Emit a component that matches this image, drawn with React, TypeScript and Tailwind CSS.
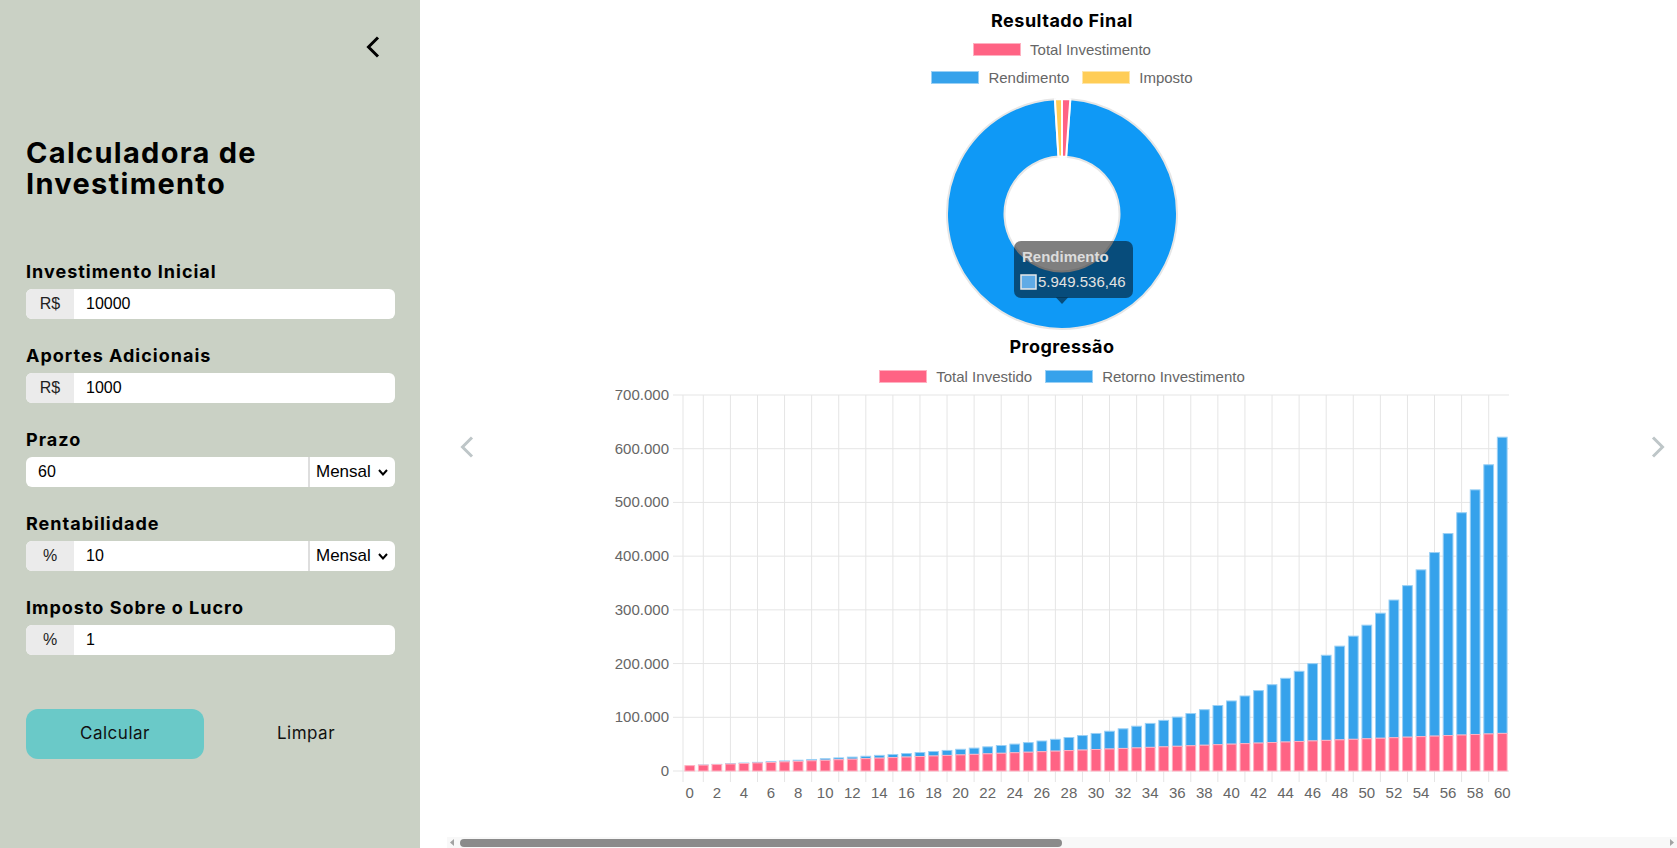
import React from 'react';

const sans = { fontFamily: 'Inter, "Noto Sans", sans-serif' };

// doughnut data
const totalInvestido = 70000;
const rendimento = 5949536.46;
const imposto = 59495.36;
const soma = totalInvestido + rendimento + imposto;

function arcPath(a0: number, a1: number, R: number, r: number, cx = 120, cy = 120) {
  const rad = (a: number) => (a * Math.PI) / 180;
  const pt = (a: number, rr: number) => [cx + rr * Math.sin(rad(a)), cy - rr * Math.cos(rad(a))];
  const large = a1 - a0 > 180 ? 1 : 0;
  const [x0, y0] = pt(a0, R);
  const [x1, y1] = pt(a1, R);
  const [x2, y2] = pt(a1, r);
  const [x3, y3] = pt(a0, r);
  return `M${x0} ${y0} A${R} ${R} 0 ${large} 1 ${x1} ${y1} L${x2} ${y2} A${r} ${r} 0 ${large} 0 ${x3} ${y3} Z`;
}

function Donut() {
  const aPink = (totalInvestido / soma) * 360;
  const aBlue = aPink + (rendimento / soma) * 360;
  return (
    <svg width="240" height="240" viewBox="0 0 240 240" className="overflow-visible">
      <path d={arcPath(aPink, aBlue, 115, 57.5)} fill="#0f99f6" stroke="#e6e6e6" strokeWidth="2" />
      <path d={arcPath(0, aPink, 115, 57.5)} fill="#ff6384" stroke="#fff" strokeWidth="2" />
      <path d={arcPath(aBlue, 360, 115, 57.5)} fill="#ffcd56" stroke="#fff" strokeWidth="2" />
      {/* tooltip */}
      <rect x="72" y="147" width="119" height="57" rx="7" fill="rgba(0,0,0,0.5)" />
      <polygon points="114,203.5 126,203.5 120,210" fill="rgba(0,0,0,0.5)" />
      <text x="80" y="168" fontSize="15" fontWeight="700" fill="#dcdcdc" fontFamily="'Liberation Sans', Arial, sans-serif">
        Rendimento
      </text>
      <rect x="79" y="181" width="15" height="14" fill="#5fabe6" stroke="#e8e8e8" strokeWidth="1.5" />
      <text x="96" y="193" fontSize="15" fill="#e2e2e2" fontFamily="'Liberation Sans', Arial, sans-serif">
        5.949.536,46
      </text>
    </svg>
  );
}

const fmt = (n: number) => n.toLocaleString('de-DE');

function BarChart() {
  const L = 81;
  const R = 907;
  const T = 10;
  const B = 386;
  const cw = (R - L) / 61;
  const bw = cw * 0.72;
  const y = (v: number) => B - (v / 700000) * (B - T);
  const months = Array.from({ length: 61 }, (_, i) => i);
  const font = "'Liberation Sans', Arial, sans-serif";

  return (
    <svg width="920" height="420" viewBox="0 0 920 420">
      {Array.from({ length: 8 }, (_, k) => (
        <g key={k}>
          <line x1={L - 10} x2={R} y1={y(k * 100000)} y2={y(k * 100000)} stroke="#e5e5e5" strokeWidth="1" />
          <text x={L - 14} y={y(k * 100000) + 5} textAnchor="end" fontSize="15" fill="#666" fontFamily={font}>
            {fmt(k * 100000)}
          </text>
        </g>
      ))}
      <line x1={L} x2={L} y1={T} y2={B + 11} stroke="#e5e5e5" />
      {Array.from({ length: 30 }, (_, k) => {
        const x = L + cw * (2 * k + 1.5);
        return <line key={k} x1={x} x2={x} y1={T} y2={B + 11} stroke="#e5e5e5" />;
      })}
      {months.map((i) => {
        const inv = 10000 + 1000 * i;
        const tot = inv + 1817 * (Math.pow(1.1, i) - 1);
        const cx = L + cw * (i + 0.5);
        return (
          <g key={i}>
            <rect x={cx - bw / 2} y={y(tot)} width={bw} height={y(inv) - y(tot)} fill="#36a2eb" stroke="#9ad0f5" strokeWidth="1" />
            <rect x={cx - bw / 2} y={y(inv)} width={bw} height={B - y(inv)} fill="#ff6384" stroke="#ffb1c1" strokeWidth="1" />
          </g>
        );
      })}
      {months
        .filter((i) => i % 2 === 0)
        .map((i) => (
          <text key={i} x={L + cw * (i + 0.5)} y={413} textAnchor="middle" fontSize="15" fill="#666" fontFamily={font}>
            {i}
          </text>
        ))}
    </svg>
  );
}

function LegendItem({ color, border, label }: { color: string; border: string; label: string }) {
  return (
    <div className="flex items-center gap-[9px]">
      <span className="block w-[48px] h-[13px] border" style={{ backgroundColor: color, borderColor: border }} />
      <span className="text-[15px] leading-[15px] text-[#666]" style={{ fontFamily: "'Liberation Sans', Arial, sans-serif" }}>
        {label}
      </span>
    </div>
  );
}

function Chevron({ dir, color, className }: { dir: 'left' | 'right'; color: string; className?: string }) {
  return (
    <svg width="14" height="22" viewBox="0 0 14 22" className={className}>
      <polyline
        points={dir === 'left' ? '12,1.5 2.5,11 12,20.5' : '2,1.5 11.5,11 2,20.5'}
        fill="none"
        stroke={color}
        strokeWidth="3"
      />
    </svg>
  );
}

function Field({
  label,
  value,
  prefix,
  select,
}: {
  label: string;
  value: string;
  prefix?: string;
  select?: boolean;
}) {
  const inputFont = { fontFamily: "'Liberation Sans', Arial, sans-serif" };
  return (
    <div className="mb-[26px]">
      <div className="text-[18px] leading-[22px] font-bold tracking-[1px] text-black mb-[6px]" style={sans}>
        {label}
      </div>
      <div className="flex h-[30px] rounded-[6px] overflow-hidden bg-white" style={inputFont}>
        {prefix && (
          <div className="w-[48px] flex items-center justify-center bg-[#ebebeb] text-[16px] text-[#222]">{prefix}</div>
        )}
        <div className="flex-1 flex items-center pl-[12px] text-[16px] text-black">{value}</div>
        {select && (
          <div className="flex items-center w-[87px] border-l-2 border-[#dedede] pl-[6px] gap-[7px] text-[17px] text-black">
            Mensal
            <svg width="10" height="7" viewBox="0 0 10 7">
              <polyline points="1,1 5,5.5 9,1" fill="none" stroke="#000" strokeWidth="2" />
            </svg>
          </div>
        )}
      </div>
    </div>
  );
}

export default function App() {
  return (
    <div className="flex h-[848px] w-full bg-white overflow-hidden">
      {/* Sidebar */}
      <aside className="w-[420px] shrink-0 bg-[#cad1c5] pl-[26px] pr-[25px] flex flex-col">
        <div className="flex justify-end pt-[36px] pr-[15px]">
          <Chevron dir="left" color="#000" />
        </div>
        <h1 className="mt-[79px] text-[29px] leading-[31px] font-bold tracking-[1.3px] text-black" style={sans}>
          Calculadora de
          <br />
          Investimento
        </h1>
        <div className="mt-[62px]">
          <Field label="Investimento Inicial" prefix="R$" value="10000" />
          <Field label="Aportes Adicionais" prefix="R$" value="1000" />
          <Field label="Prazo" value="60" select />
          <Field label="Rentabilidade" prefix="%" value="10" select />
          <Field label="Imposto Sobre o Lucro" prefix="%" value="1" />
        </div>
        <div className="mt-[28px] flex gap-[13px]">
          <button className="flex-1 h-[50px] rounded-[12px] bg-[#6ac9c8] text-[17px] tracking-[0.5px] text-[#111]" style={sans}>
            Calcular
          </button>
          <button className="flex-1 h-[50px] rounded-[12px] text-[17px] tracking-[0.5px] text-[#111]" style={sans}>
            Limpar
          </button>
        </div>
      </aside>

      {/* Charts */}
      <main className="flex-1 ml-[27px] flex flex-col min-w-0">
        <div className="relative flex-1 flex flex-col items-center">
          <Chevron dir="left" color="#bec6c8" className="absolute left-[13px] top-[436px]" />
          <Chevron dir="right" color="#bec6c8" className="absolute right-[12px] top-[436px]" />

          <div className="mt-[10px] h-[22px] leading-[22px] text-[18px] font-bold tracking-[0.5px] text-black" style={sans}>
            Resultado Final
          </div>
          <div className="mt-[10px] h-[15px] flex items-center">
            <LegendItem color="#ff6384" border="#ffb1c1" label="Total Investimento" />
          </div>
          <div className="mt-[13px] h-[15px] flex items-center gap-[13px]">
            <LegendItem color="#36a2eb" border="#9ad0f5" label="Rendimento" />
            <LegendItem color="#ffcd56" border="#ffe6aa" label="Imposto" />
          </div>
          <div className="mt-[9px]">
            <Donut />
          </div>
          <div className="mt-[2px] h-[22px] leading-[22px] text-[18px] font-bold tracking-[0.5px] text-black" style={sans}>
            Progressão
          </div>
          <div className="mt-[11px] h-[15px] flex items-center gap-[13px]">
            <LegendItem color="#ff6384" border="#ffb1c1" label="Total Investido" />
            <LegendItem color="#36a2eb" border="#9ad0f5" label="Retorno Investimento" />
          </div>
          <div className="mt-[1px]">
            <BarChart />
          </div>
        </div>

        {/* horizontal scrollbar */}
        <div className="h-[11px] flex items-center bg-[#f8f8f8]">
          <svg width="13" height="11" viewBox="0 0 13 11">
            <polygon points="7,2 7,9 3,5.5" fill="#a3a3a3" />
          </svg>
          <div className="w-[602px] h-[8px] rounded-full bg-[#8b8b8b]" />
          <div className="flex-1" />
          <svg width="13" height="11" viewBox="0 0 13 11">
            <polygon points="6,2 6,9 10,5.5" fill="#a3a3a3" />
          </svg>
        </div>
      </main>
    </div>
  );
}
